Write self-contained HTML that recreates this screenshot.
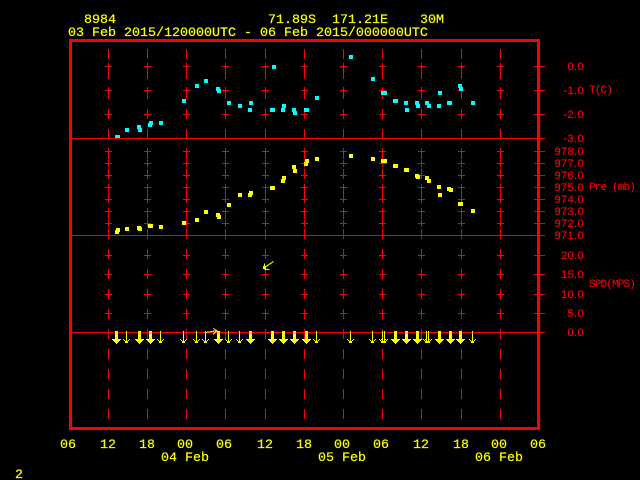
<!DOCTYPE html>
<html><head><meta charset="utf-8"><style>
html,body{margin:0;padding:0;background:#000;width:640px;height:480px;overflow:hidden}
svg{display:block}
text{white-space:pre}
.y{fill:#ff0;font-family:"Liberation Mono",monospace;font-size:13.33px;stroke:#ff0;stroke-width:.2}
.r{fill:#f00;font-family:"Liberation Sans",sans-serif;font-size:11px;letter-spacing:.4px;text-anchor:end;stroke:#f00;stroke-width:.15}
.l{fill:#f00;font-family:"Liberation Mono",monospace;font-size:11px;letter-spacing:-.85px;stroke:#f00;stroke-width:.1}
</style></head><body>
<svg width="640" height="480" viewBox="0 0 640 480" xmlns="http://www.w3.org/2000/svg" shape-rendering="crispEdges">
<defs>
<g id="p"><rect x="-3" y="0" width="7" height="1"/><rect x="0" y="-3" width="1" height="7"/></g>
<g id="c" fill="#f00">
<rect x="0" y="49" width="1" height="10"/><rect x="0" y="69" width="1" height="10"/><rect x="0" y="89" width="1" height="10"/><rect x="0" y="109" width="1" height="10"/><rect x="0" y="129" width="1" height="9"/><rect x="0" y="149" width="1" height="10"/><rect x="0" y="169" width="1" height="10"/><rect x="0" y="189" width="1" height="10"/><rect x="0" y="209" width="1" height="10"/><rect x="0" y="229" width="1" height="10"/><rect x="0" y="249" width="1" height="10"/><rect x="0" y="269" width="1" height="10"/><rect x="0" y="289" width="1" height="10"/><rect x="0" y="309" width="1" height="10"/><rect x="0" y="329" width="1" height="10"/><rect x="0" y="349" width="1" height="10"/><rect x="0" y="369" width="1" height="10"/><rect x="0" y="389" width="1" height="10"/><rect x="0" y="409" width="1" height="10"/>
<use href="#p" y="66"/><use href="#p" y="90"/><use href="#p" y="114"/><use href="#p" y="151"/><use href="#p" y="163"/><use href="#p" y="175"/><use href="#p" y="187"/><use href="#p" y="199"/><use href="#p" y="211"/><use href="#p" y="223"/><use href="#p" y="255"/><use href="#p" y="274"/><use href="#p" y="294"/><use href="#p" y="313"/>
</g>
<g id="a" fill="#ff0"><rect x="-1" y="331" width="3" height="9"/><rect x="-4" y="339" width="9" height="1"/><rect x="-3" y="340" width="7" height="1"/><rect x="-2" y="341" width="5" height="1"/><rect x="-1" y="342" width="3" height="1"/><rect x="0" y="343" width="1" height="1"/></g>
<g id="t" fill="#ff0"><rect x="0" y="331" width="1" height="12"/><rect x="-3" y="339" width="1" height="1"/><rect x="3" y="339" width="1" height="1"/><rect x="-2" y="340" width="1" height="1"/><rect x="2" y="340" width="1" height="1"/><rect x="-1" y="341" width="1" height="1"/><rect x="1" y="341" width="1" height="1"/><rect x="-1" y="342" width="3" height="1"/></g>
</defs>
<rect width="640" height="480" fill="#000"/>

<use href="#c" x="108"/><use href="#c" x="147"/><use href="#c" x="186"/><use href="#c" x="225"/><use href="#c" x="265"/><use href="#c" x="304"/><use href="#c" x="343"/><use href="#c" x="382"/><use href="#c" x="421"/><use href="#c" x="461"/><use href="#c" x="500"/>

<g fill="#f00">
<rect x="534" y="66" width="11" height="1"/><rect x="534" y="90" width="11" height="1"/><rect x="534" y="114" width="11" height="1"/><rect x="534" y="151" width="11" height="1"/><rect x="534" y="163" width="11" height="1"/><rect x="534" y="175" width="11" height="1"/><rect x="534" y="187" width="11" height="1"/><rect x="534" y="199" width="11" height="1"/><rect x="534" y="211" width="11" height="1"/><rect x="534" y="223" width="11" height="1"/><rect x="534" y="255" width="11" height="1"/><rect x="534" y="274" width="11" height="1"/><rect x="534" y="294" width="11" height="1"/><rect x="534" y="313" width="11" height="1"/>
</g>

<g fill="#0ff">
<rect x="115" y="135" width="5" height="4"/><rect x="125" y="128" width="4" height="4"/><rect x="137" y="125" width="4" height="4"/><rect x="138" y="128" width="4" height="4"/><rect x="148" y="123" width="4" height="4"/><rect x="149" y="121" width="4" height="4"/><rect x="159" y="121" width="4" height="4"/><rect x="182" y="99" width="4" height="4"/><rect x="195" y="84" width="4" height="4"/><rect x="204" y="79" width="4" height="4"/><rect x="216" y="87" width="4" height="4"/><rect x="217" y="89" width="4" height="4"/><rect x="227" y="101" width="4" height="4"/><rect x="238" y="104" width="4" height="4"/><rect x="249" y="101" width="4" height="4"/><rect x="248" y="108" width="4" height="4"/><rect x="270" y="108" width="5" height="4"/><rect x="272" y="65" width="4" height="4"/><rect x="281" y="108" width="4" height="4"/><rect x="282" y="104" width="4" height="4"/><rect x="292" y="108" width="4" height="4"/><rect x="293" y="111" width="4" height="4"/><rect x="304" y="108" width="5" height="4"/><rect x="315" y="96" width="4" height="4"/>
<rect x="349" y="55" width="4" height="4"/><rect x="371" y="77" width="4" height="4"/><rect x="381" y="91" width="6" height="4"/><rect x="393" y="99" width="5" height="4"/><rect x="404" y="101" width="4" height="4"/><rect x="405" y="108" width="4" height="4"/><rect x="415" y="101" width="4" height="4"/><rect x="416" y="104" width="4" height="4"/><rect x="425" y="101" width="4" height="4"/><rect x="427" y="104" width="4" height="4"/><rect x="437" y="104" width="4" height="4"/><rect x="438" y="91" width="4" height="4"/><rect x="447" y="101" width="5" height="4"/><rect x="458" y="84" width="4" height="4"/><rect x="459" y="87" width="4" height="4"/><rect x="471" y="101" width="4" height="4"/>
</g>

<g fill="#ff0">
<rect x="115" y="230" width="4" height="4"/><rect x="116" y="228" width="4" height="4"/><rect x="125" y="227" width="4" height="4"/><rect x="137" y="226" width="4" height="4"/><rect x="138" y="227" width="4" height="4"/><rect x="148" y="224" width="5" height="4"/><rect x="159" y="225" width="4" height="4"/><rect x="182" y="221" width="4" height="4"/><rect x="195" y="218" width="4" height="4"/><rect x="204" y="210" width="4" height="4"/><rect x="216" y="213" width="4" height="4"/><rect x="217" y="215" width="4" height="4"/><rect x="227" y="203" width="4" height="4"/><rect x="238" y="193" width="4" height="4"/><rect x="248" y="193" width="4" height="4"/><rect x="249" y="191" width="4" height="4"/><rect x="270" y="186" width="5" height="4"/><rect x="281" y="179" width="4" height="4"/><rect x="282" y="176" width="4" height="4"/><rect x="292" y="165" width="4" height="4"/><rect x="293" y="169" width="4" height="4"/><rect x="304" y="162" width="4" height="4"/><rect x="305" y="159" width="4" height="4"/><rect x="315" y="157" width="4" height="4"/>
<rect x="349" y="154" width="4" height="4"/><rect x="371" y="157" width="4" height="4"/><rect x="381" y="159" width="6" height="4"/><rect x="393" y="164" width="5" height="4"/><rect x="404" y="168" width="5" height="4"/><rect x="415" y="174" width="4" height="4"/><rect x="416" y="175" width="4" height="4"/><rect x="425" y="176" width="4" height="4"/><rect x="427" y="179" width="4" height="4"/><rect x="437" y="185" width="4" height="4"/><rect x="438" y="193" width="4" height="4"/><rect x="447" y="187" width="4" height="4"/><rect x="449" y="188" width="4" height="4"/><rect x="458" y="202" width="5" height="4"/><rect x="471" y="209" width="4" height="4"/>
</g>

<g fill="#f00">
<rect x="72" y="138" width="473" height="1"/><rect x="72" y="235" width="473" height="1"/><rect x="72" y="332" width="473" height="1"/>
<rect x="69" y="39" width="471" height="3"/><rect x="69" y="427" width="471" height="3"/><rect x="69" y="39" width="3" height="391"/><rect x="537" y="39" width="3" height="391"/>
</g>

<use href="#a" x="116"/><use href="#t" x="126"/><use href="#a" x="139"/><use href="#a" x="150"/><use href="#t" x="160"/><use href="#t" x="183"/><use href="#t" x="196"/><use href="#t" x="205"/><use href="#a" x="218"/><use href="#t" x="228"/><use href="#t" x="239"/><use href="#a" x="250"/><use href="#a" x="272"/><use href="#a" x="283"/><use href="#a" x="294"/><use href="#a" x="306"/><use href="#t" x="316"/><use href="#t" x="350"/><use href="#t" x="372"/><use href="#t" x="382"/><use href="#t" x="384"/><use href="#a" x="395"/><use href="#a" x="406"/><use href="#a" x="417"/><use href="#t" x="426"/><use href="#t" x="428"/><use href="#a" x="439"/><use href="#a" x="450"/><use href="#a" x="460"/><use href="#t" x="472"/>

<g fill="none" stroke="#ff0" stroke-width="1">
<path d="M205.5 332.5L212 331.5L217 330.5M213 328.5L217 330.5L213 334.5"/>
<path d="M273.5 261.5L264.5 267.5M264.5 263.5V268.5M264.5 269.5H269.5"/>
</g>
<rect x="263" y="266" width="3" height="3" fill="#ff0"/>

<text class="y" x="84" y="23">8984</text>
<text class="y" x="268" y="23">71.89S</text>
<text class="y" x="332" y="23">171.21E</text>
<text class="y" x="420" y="23">30M</text>
<text class="y" x="68" y="36">03 Feb 2015/120000UTC - 06 Feb 2015/000000UTC</text>
<text class="y" x="60" y="448">06</text>
<text class="y" x="100" y="448">12</text>
<text class="y" x="139" y="448">18</text>
<text class="y" x="177" y="448">00</text>
<text class="y" x="216" y="448">06</text>
<text class="y" x="257" y="448">12</text>
<text class="y" x="296" y="448">18</text>
<text class="y" x="334" y="448">00</text>
<text class="y" x="373" y="448">06</text>
<text class="y" x="413" y="448">12</text>
<text class="y" x="453" y="448">18</text>
<text class="y" x="491" y="448">00</text>
<text class="y" x="530" y="448">06</text>
<text class="y" x="161" y="461">04 Feb</text>
<text class="y" x="318" y="461">05 Feb</text>
<text class="y" x="475" y="461">06 Feb</text>
<text class="y" x="15" y="478">2</text>

<text class="r" x="584" y="70">0.0</text>
<text class="r" x="584" y="94">-1.0</text>
<text class="r" x="584" y="118">-2.0</text>
<text class="r" x="584" y="142">-3.0</text>
<text class="r" x="584" y="155">978.0</text>
<text class="r" x="584" y="167">977.0</text>
<text class="r" x="584" y="179">976.0</text>
<text class="r" x="584" y="191">975.0</text>
<text class="r" x="584" y="203">974.0</text>
<text class="r" x="584" y="215">973.0</text>
<text class="r" x="584" y="227">972.0</text>
<text class="r" x="584" y="239">971.0</text>
<text class="r" x="584" y="259">20.0</text>
<text class="r" x="584" y="278">15.0</text>
<text class="r" x="584" y="298">10.0</text>
<text class="r" x="584" y="317">5.0</text>
<text class="r" x="584" y="336">0.0</text>
<text class="l" x="589" y="93">T(C)</text>
<text class="l" x="589" y="190">Pre (mb)</text>
<text class="l" x="589" y="287">SPD(MPS)</text>
</svg>
</body></html>
